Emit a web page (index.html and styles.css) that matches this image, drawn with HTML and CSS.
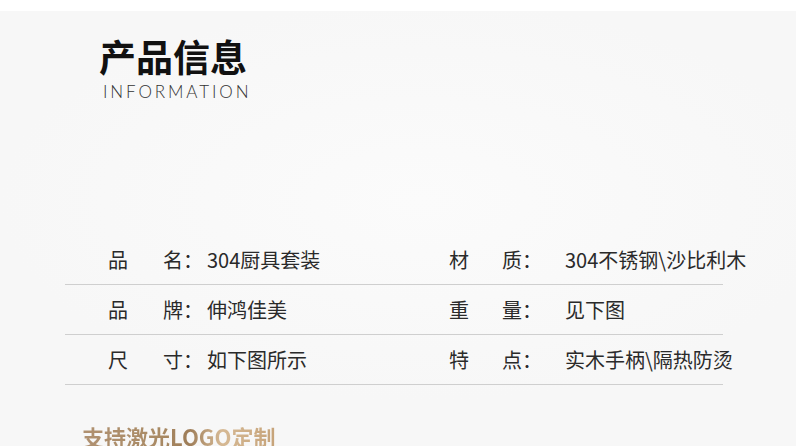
FILE: index.html
```html
<!DOCTYPE html>
<html lang="zh">
<head>
<meta charset="utf-8">
<link rel="stylesheet" href="styles.css">
</head>
<body>
<div class="page">
  <header class="head">
    <h1 class="title">产品信息</h1>
    <div class="sub">INFORMATION</div>
  </header>
  <div class="specs">
    <div class="row">
      <span class="k1">品</span><span class="k2">名：</span><span class="v">304厨具套装</span>
      <span class="k1">材</span><span class="k2">质：</span><span class="v">304不锈钢\沙比利木</span>
    </div>
    <div class="row">
      <span class="k1">品</span><span class="k2">牌：</span><span class="v">伸鸿佳美</span>
      <span class="k1">重</span><span class="k2">量：</span><span class="v">见下图</span>
    </div>
    <div class="row">
      <span class="k1">尺</span><span class="k2">寸：</span><span class="v">如下图所示</span>
      <span class="k1">特</span><span class="k2">点：</span><span class="v">实木手柄\隔热防烫</span>
    </div>
  </div>
  <div class="logo-line">支持激光LOGO定制</div>
</div>
</body>
</html>
```
FILE: styles.css
```css
html, body {
  margin: 0;
  padding: 0;
  background: #ffffff;
  overflow: hidden;
}
body {
  font-family: "Noto Sans CJK SC", "Noto Sans", sans-serif;
  color: #333;
}
.page {
  margin-top: 11px;
  width: 796px;
  height: 435px;
  background: radial-gradient(ellipse 420px 200px at 420px 190px, #fbfbfb 0%, #f7f7f7 100%);
  overflow: hidden;
}
.head {
  padding: 25px 0 0 99px;
}
.title {
  margin: 0;
  font-size: 37px;
  line-height: 40px;
  font-weight: 700;
  color: #111;
}
.sub {
  margin: 7px 0 0 4px;
  font-family: "Lato", "Open Sans", "Liberation Sans", sans-serif;
  font-weight: 300;
  font-size: 17px;
  line-height: 18px;
  letter-spacing: 2.9px;
  color: #333;
}
.specs {
  margin: 134px 0 0 65px;
  width: 658px;
}
.row {
  box-sizing: border-box;
  display: grid;
  grid-template-columns: 55px 44px 242px 53px 63px 1fr;
  padding-left: 43px;
  height: 50px;
  align-items: center;
  border-bottom: 1px solid #cfcfcf;
  font-size: 20px;
  line-height: 24px;
  color: #2a2a2a;
  white-space: nowrap;
}
.logo-line {
  margin: 37px 0 0 82px;
  font-size: 22px;
  line-height: 28px;
  font-weight: 700;
  display: inline-block;
  background: linear-gradient(90deg, #b09171 0%, #a98a64 40%, #9e7d58 55%, #d6b994 72%, #c6a379 100%);
  -webkit-background-clip: text;
  background-clip: text;
  color: transparent;
}
```
